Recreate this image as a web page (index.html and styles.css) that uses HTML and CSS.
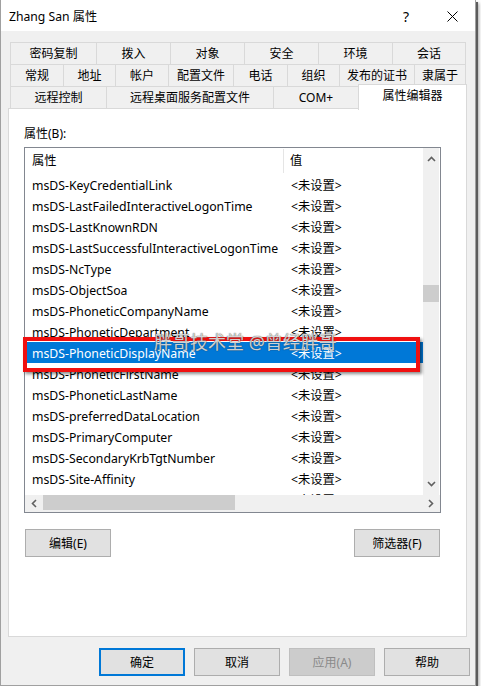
FILE: index.html
```html
<!DOCTYPE html>
<html lang="zh-CN">
<head>
<meta charset="utf-8">
<title>Zhang San 属性</title>
<link rel="stylesheet" href="styles.css">
</head>
<body>
<div class="window">
  <div class="titlebar">
    <span class="title">Zhang San 属性</span>
    <span class="capbtn help">?</span>
    <span class="capbtn close"><svg width="11" height="11" viewBox="0 0 11 11"><path d="M0.5 0.5L10.5 10.5M10.5 0.5L0.5 10.5" stroke="#000" stroke-width="1"/></svg></span>
  </div>
  <div class="client">
    <div class="tabs">
      <div class="tabrow row1">
        <div class="tab">密码复制</div><div class="tab">拨入</div><div class="tab">对象</div><div class="tab">安全</div><div class="tab">环境</div><div class="tab">会话</div>
      </div>
      <div class="tabrow row2">
        <div class="tab">常规</div><div class="tab">地址</div><div class="tab">帐户</div><div class="tab">配置文件</div><div class="tab">电话</div><div class="tab">组织</div><div class="tab">发布的证书</div><div class="tab">隶属于</div>
      </div>
      <div class="tabrow row3">
        <div class="tab">远程控制</div><div class="tab">远程桌面服务配置文件</div><div class="tab">COM+</div><div class="tab active">属性编辑器</div>
      </div>
    </div>
    <div class="panel">
      <div class="label">属性(B):</div>
      <div class="listbox">
        <div class="listarea">
          <div class="rows">
            <div class="row head"><span class="c1">属性</span><span class="c2">值</span></div>
            <div class="row"><span class="c1">msDS-KeyCredentialLink</span><span class="c2">&lt;未设置&gt;</span></div>
            <div class="row"><span class="c1">msDS-LastFailedInteractiveLogonTime</span><span class="c2">&lt;未设置&gt;</span></div>
            <div class="row"><span class="c1">msDS-LastKnownRDN</span><span class="c2">&lt;未设置&gt;</span></div>
            <div class="row"><span class="c1">msDS-LastSuccessfulInteractiveLogonTime</span><span class="c2">&lt;未设置&gt;</span></div>
            <div class="row"><span class="c1">msDS-NcType</span><span class="c2">&lt;未设置&gt;</span></div>
            <div class="row"><span class="c1">msDS-ObjectSoa</span><span class="c2">&lt;未设置&gt;</span></div>
            <div class="row"><span class="c1">msDS-PhoneticCompanyName</span><span class="c2">&lt;未设置&gt;</span></div>
            <div class="row"><span class="c1">msDS-PhoneticDepartment</span><span class="c2">&lt;未设置&gt;</span></div>
            <div class="row selected"><span class="c1">msDS-PhoneticDisplayName</span><span class="c2">&lt;未设置&gt;</span></div>
            <div class="row"><span class="c1">msDS-PhoneticFirstName</span><span class="c2">&lt;未设置&gt;</span></div>
            <div class="row"><span class="c1">msDS-PhoneticLastName</span><span class="c2">&lt;未设置&gt;</span></div>
            <div class="row"><span class="c1">msDS-preferredDataLocation</span><span class="c2">&lt;未设置&gt;</span></div>
            <div class="row"><span class="c1">msDS-PrimaryComputer</span><span class="c2">&lt;未设置&gt;</span></div>
            <div class="row"><span class="c1">msDS-SecondaryKrbTgtNumber</span><span class="c2">&lt;未设置&gt;</span></div>
            <div class="row"><span class="c1">msDS-Site-Affinity</span><span class="c2">&lt;未设置&gt;</span></div>
            <div class="row"><span class="c1">msDS-SourceAnchor</span><span class="c2">&lt;未设置&gt;</span></div>
          </div>
          <div class="vscroll">
            <svg class="arrow" width="9" height="6" viewBox="0 0 9 6"><path d="M1 5L4.5 1.5L8 5" fill="none" stroke="#606060" stroke-width="1.6"/></svg>
            <div class="vtrack"><div class="vthumb"></div></div>
            <svg class="arrow" width="9" height="6" viewBox="0 0 9 6"><path d="M1 1L4.5 4.5L8 1" fill="none" stroke="#606060" stroke-width="1.6"/></svg>
          </div>
        </div>
        <div class="hscroll">
          <svg class="arrow" width="6" height="9" viewBox="0 0 6 9"><path d="M5 1L1.5 4.5L5 8" fill="none" stroke="#606060" stroke-width="1.6"/></svg>
          <div class="htrack"><div class="hthumb"></div></div>
          <svg class="arrow" width="6" height="9" viewBox="0 0 6 9"><path d="M1 1L4.5 4.5L1 8" fill="none" stroke="#606060" stroke-width="1.6"/></svg>
        </div>
      </div>
      <div class="panelbtns">
        <button class="btn">编辑(E)</button>
        <button class="btn">筛选器(F)</button>
      </div>
    </div>
    <div class="footer">
      <button class="btn default">确定</button>
      <button class="btn">取消</button>
      <button class="btn disabled">应用(A)</button>
      <button class="btn">帮助</button>
    </div>
  </div>
  <div class="redbox"></div>
  <div class="watermark">胖哥技术堂 @曾经胖哥</div>
</div>
</body>
</html>
```

FILE: styles.css
```css
* { box-sizing: border-box; }
html, body { margin: 0; padding: 0; background: #ffffff; }
body {
  font-family: "Noto Sans", "Noto Sans CJK SC", sans-serif;
  font-size: 12px;
  color: #000;
}
.window {
  position: relative;
  width: 476px;
  height: 686px;
  background: #f0f0f0;
  border: 1px solid #a0a0a0;
  border-top: none;
  box-shadow: 2px 2px 0 #5c5c5c, 3px 3px 3px rgba(0,0,0,0.35);
  display: flex;
  flex-direction: column;
}
.titlebar {
  height: 31px;
  background: #fff;
  display: flex;
  align-items: center;
  padding-left: 8px;
  padding-top: 1px;
}
.title { font-size: 12.2px; flex: 1; }
.capbtn {
  width: 46px;
  height: 30px;
  display: flex;
  align-items: center;
  justify-content: center;
}
.help { font-size: 14px; }
.client {
  flex: 1;
  display: flex;
  flex-direction: column;
}
.tabs { margin: 11px 0 0 9px; }
.tabrow { display: flex; align-items: flex-start; }
.tabrow + .tabrow { margin-top: -1px; }
.tab {
  height: 23px;
  border: 1px solid #d9d9d9;
  background: #f0f0f0;
  text-align: center;
  line-height: 21px;
  white-space: nowrap;
  flex: none;
}
.tab + .tab { margin-left: -1px; }
.row1 .tab:nth-child(1) { width: 87px; }
.row1 .tab:nth-child(2),
.row1 .tab:nth-child(3),
.row1 .tab:nth-child(4),
.row1 .tab:nth-child(5) { width: 75px; }
.row1 .tab:nth-child(6) { width: 74px; }
.row2 .tab:nth-child(1) { width: 54px; }
.row2 .tab:nth-child(2) { width: 53px; }
.row2 .tab:nth-child(3) { width: 54px; }
.row2 .tab:nth-child(4) { width: 66px; }
.row2 .tab:nth-child(5) { width: 55px; }
.row2 .tab:nth-child(6) { width: 53px; }
.row2 .tab:nth-child(7) { width: 76px; }
.row2 .tab:nth-child(8) { width: 52px; }
.row3 .tab:nth-child(1) { width: 97px; }
.row3 .tab:nth-child(2) { width: 168px; }
.row3 .tab:nth-child(3) { width: 86px; }
.tab.active {
  position: relative;
  z-index: 1;
  width: 109px;
  height: 26px;
  margin-top: -2px;
  margin-bottom: -1px;
  background: #fff;
  border-bottom: none;
  line-height: 22px;
}
.panel {
  margin: -1px 0 0 7px;
  width: 459px;
  height: 529px;
  background: #fff;
  border: 1px solid #d9d9d9;
  padding: 17px 0 0 15px;
}
.label { line-height: 16px; height: 16px; }
.listbox {
  margin-top: 5px;
  width: 417px;
  height: 366px;
  border: 1px solid #828790;
  background: #fff;
  display: flex;
  flex-direction: column;
}
.listarea {
  height: 347px;
  display: flex;
  overflow: hidden;
}
.rows { width: 398px; overflow: hidden; font-size: 12.25px; }
.row {
  display: flex;
  height: 21px;
  padding-top: 2px;
  line-height: 19px;
  white-space: nowrap;
}
.row.head { height: 26px; padding-top: 0; line-height: 26px; }
.c1 { width: 259px; padding-left: 7px; flex: none; overflow: hidden; }
.c2 { padding-left: 7px; flex: 1; }
.row.head .c1 { border-right: 1px solid #e5e5e5; height: 24px; line-height: 24px; margin-top: 1px; }
.row.head .c2 { padding-left: 6px; }
.row.selected { background: #0078d7; color: #fff; }
.vscroll {
  width: 16px;
  margin-right: 1px;
  background: #f0f0f0;
  display: flex;
  flex-direction: column;
  align-items: center;
}
.vscroll .arrow { margin: 8px 0; flex: none; }
.vtrack { flex: 1; width: 100%; }
.vthumb {
  margin-top: 115px;
  height: 17px;
  background: #cdcdcd;
}
.hscroll {
  height: 17px;
  background: #f0f0f0;
  display: flex;
  align-items: center;
}
.hscroll .arrow { margin: 0 6px; flex: none; }
.htrack { flex: 1; height: 100%; }
.hthumb {
  width: 192px;
  height: 15px;
  background: #cdcdcd;
}
.panelbtns {
  margin-top: 16px;
  width: 416px;
  padding-left: 1px;
  display: flex;
  justify-content: space-between;
}
.btn {
  width: 86px;
  height: 28px;
  border: 1px solid #adadad;
  background: #e1e1e1;
  font-family: inherit;
  font-size: 12px;
  color: #000;
  padding: 0;
}
.btn.default { border: 2px solid #0078d7; }
.btn.disabled { background: #cccccc; border-color: #bfbfbf; color: #8a8a8a; }
.footer {
  margin-top: 11px;
  display: flex;
  justify-content: flex-end;
  gap: 9px;
  padding-right: 5px;
}
.redbox {
  position: absolute;
  left: 22px;
  top: 337px;
  width: 397px;
  height: 35px;
  border: 4px solid #f01010;
  box-shadow: 2px 2px 3px rgba(0,0,0,0.45);
}
.watermark {
  position: absolute;
  left: 153px;
  top: 330px;
  font-size: 18px;
  line-height: 24px;
  white-space: nowrap;
  color: rgba(255,255,255,0.75);
  text-shadow: 0 0 1px rgba(60,60,60,0.8), 0 0 1px rgba(60,60,60,0.6);
}
```
